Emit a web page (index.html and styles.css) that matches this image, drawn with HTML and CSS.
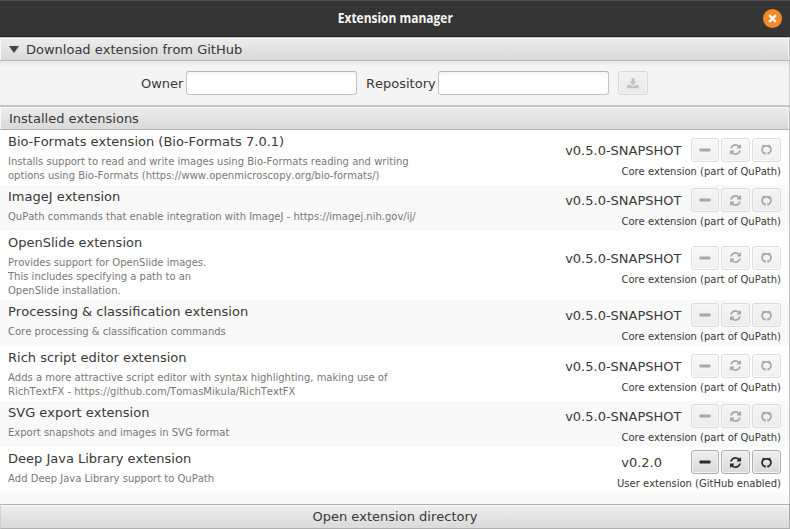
FILE: index.html
```html
<!DOCTYPE html>
<html lang="en">
<head>
<meta charset="utf-8">
<title>Extension manager</title>
<link rel="stylesheet" href="styles.css">
</head>
<body>
<svg class="sprite" aria-hidden="true">
  <symbol id="minus" viewBox="0 0 12 12"><rect x=".5" y="4.600" width="11" height="2.800" rx=".6" fill="currentColor"/></symbol>
  <symbol id="refresh" viewBox="0 0 1536 1536"><path fill="currentColor" d="M1511 928q0 5-1 7-64 268-268 434.500T764 1536q-146 0-282.500-55T238 1324l-129 129q-19 19-45 19t-45-19-19-45V960q0-26 19-45t45-19h448q26 0 45 19t19 45-19 45l-137 137q71 66 161 102t187 36q134 0 250-65t186-179q11-17 53-117 8-23 30-23h192q13 0 22.500 9.500t9.500 22.500zm25-800v448q0 26-19 45t-45 19h-448q-26 0-45-19t-19-45 19-45l138-138Q969 256 768 256q-134 0-250 65T332 500q-11 17-53 117-8 23-30 23H50q-13 0-22.500-9.500T18 608v-7q65-268 270-434.500T768 0q146 0 284 55.500T1297 212l130-129q19-19 45-19t45 19 19 45z"/></symbol>
  <symbol id="github" viewBox="0 0 12 12"><path fill="none" stroke="currentColor" stroke-width="1.900" d="M4.200 11.400V8.900M7.800 11.400V8.900M4.200 10.500A4.900 4.900 0 0 1 2 3.200Q6 .9 10 3.200A4.900 4.900 0 0 1 7.800 10.500"/><path fill="currentColor" d="M1.700.6L5 2 2 5zM10.300.6L7 2l3 3z"/></symbol>
  <symbol id="download" viewBox="0 0 12 12"><path fill="currentColor" d="M4.600 1h2.800v3.500h2.200L6 8.200 2.400 4.500h2.200zM.7 7.900h3L6 9.600l2.300-1.700h3c.3 0 .5.200.5.500v2.300c0 .3-.2.500-.5.500H.7c-.3 0-.5-.2-.5-.5V8.400c0-.3.200-.5.500-.5z"/></symbol>
</svg>
<div class="window">
  <header class="titlebar">
    <span class="spacer"></span>
    <h1 class="title">Extension manager</h1>
    <button class="close" aria-label="Close"><svg viewBox="0 0 8 8"><path d="M1 1l6 6M7 1L1 7"/></svg></button>
  </header>
  <div class="pane-header"><span class="arrow"></span>Download extension from GitHub</div>
  <div class="download">
    <label for="owner">Owner</label><input id="owner" class="field">
    <label for="repo" class="second">Repository</label><input id="repo" class="field">
    <button class="btn get" disabled aria-label="Download"><svg><use href="#download"/></svg></button>
  </div>
  <div class="pane-header">Installed extensions</div>
  <main class="list" id="list"></main>
  <button class="open">Open extension directory</button>
</div>
<script src="script.js"></script>
</body>
</html>
```
FILE: styles.css
```css
* { box-sizing: border-box; }
body {
  margin: 0;
  font: 13px/16px "DejaVu Sans", sans-serif;
  font-kerning: none;
  color: #383838;
  background: #f4f4f4;
}
button { font: inherit; font-kerning: none; color: inherit; padding: 0; margin: 0; }
.sprite { display: none; }
.window { width: 790px; height: 529px; display: flex; flex-direction: column; overflow: hidden; }
.titlebar {
  flex: 0 0 37px;
  display: flex;
  align-items: center;
  justify-content: space-between;
  padding: 0 8px 0 9px;
  background: #353535;
  border-top: 1px solid #505050;
  border-bottom: 1px solid #242424;
}
.spacer { width: 18px; }
.title {
  margin: 0 0 2px;
  font: 700 14px/18px "Open Sans", sans-serif;
  color: #f6f6f6;
  white-space: nowrap;
  transform: scaleX(.855);
}
.close {
  width: 19px;
  height: 19px;
  border: 0;
  border-radius: 50%;
  background: #f58a2b;
  display: grid;
  place-items: center;
  margin-bottom: 1px;
}
.close svg { width: 9px; height: 9px; fill: none; stroke: #fff; stroke-width: 1.9; }
.pane-header {
  flex: 0 0 24px;
  display: flex;
  align-items: center;
  padding: 1px 8px 0 9px;
  border: 1px solid #c2c2c2;
  border-left: 0;
  border-bottom-color: #b5b5b5;
  background: linear-gradient(#ededed, #d9d9d9);
  box-shadow: inset 1px 1px #fafafa, inset -1px 0 #f0f0f0;
}
.arrow {
  border: 5px solid transparent;
  border-top: 7px solid #444;
  border-bottom: 0;
  margin-right: 7px;
}
.download {
  flex: 0 0 45px;
  display: flex;
  align-items: center;
  padding: 0 0 1px 141px;
  background: linear-gradient(#e9e9e9, #f4f4f4 6px);
  border-right: 1px solid #c8c8c8;
  border-bottom: 1px solid #c8c8c8;
}
.download label { padding-top: 2px; }
.field {
  width: 171px;
  height: 24px;
  margin: 0 0 0 3px;
  border: 1px solid #c3c3c3;
  border-top-color: #b4b4b4;
  border-radius: 3px;
  background: linear-gradient(#f4f4f4, #fff 5px);
  outline: 0;
}
.second { margin-left: 8.500px; }
.second + .field { margin-left: 2.500px; }
.btn {
  width: 29px;
  height: 24px;
  display: grid;
  place-items: center;
  border: 1px solid #acacac;
  border-radius: 3px;
  background: linear-gradient(#efefef, #d9d9d9);
  box-shadow: inset 0 0 0 1px #f3f3f3;
  color: #2b2b2b;
}
.btn:disabled { opacity: .4; }
.btn svg { width: 12px; height: 12px; }
.btn .refresh, .btn .github { width: 11px; height: 11px; }
.get { width: 30px; margin-left: 9px; }
.get:disabled { color: #777; }
.list {
  flex: 1;
  background: #f9f9f9;
  border-right: 1px solid #c8c8c8;
  min-height: 0;
}
.row {
  display: flex;
  justify-content: space-between;
  min-height: 46px;
  padding: 0 8px;
  background: #fff;
}
.row:nth-child(even) { background: #f9f9f9; }
.name { margin: 0; padding-top: 4px; font-size: 13px; font-weight: 400; line-height: 16px; }
.desc { margin: 5px 0 2px; font-size: 10px; line-height: 14px; color: #777; white-space: pre; }
.side { align-self: center; height: 46px; padding-top: 3px; }
.actions { display: flex; justify-content: flex-end; align-items: center; }
.version { margin-right: 9.500px; padding-top: 2px; }
.user .version { margin-right: 29px; }
.actions .btn + .btn { margin-left: 2px; }
.actions .btn:first-of-type { width: 28px; }
.origin { font-size: 10px; line-height: 14px; text-align: right; margin-top: 3px; }
.open {
  flex: 0 0 25px;
  padding-top: 1px;
  border: 1px solid #b0b0b0;
  border-left-color: #d0d0d0;
  background: linear-gradient(#efefef, #d9d9d9);
  box-shadow: inset 0 1px #fafafa;
}
```
FILE: script.js
```js
const extensions = [
  ["Bio-Formats extension (Bio-Formats 7.0.1)", "Installs support to read and write images using Bio-Formats reading and writing\noptions using Bio-Formats (https://www.openmicroscopy.org/bio-formats/)"],
  ["ImageJ extension", "QuPath commands that enable integration with ImageJ - https://imagej.nih.gov/ij/"],
  ["OpenSlide extension", "Provides support for OpenSlide images.\nThis includes specifying a path to an\nOpenSlide installation."],
  ["Processing & classification extension", "Core processing & classification commands"],
  ["Rich script editor extension", "Adds a more attractive script editor with syntax highlighting, making use of\nRichTextFX - https://github.com/TomasMikula/RichTextFX"],
  ["SVG export extension", "Export snapshots and images in SVG format"],
  ["Deep Java Library extension", "Add Deep Java Library support to QuPath", "v0.2.0"]
];
const escapeText = s => s.replace(/&/g, "&amp;");
document.getElementById("list").innerHTML = extensions.map(([name, desc, version]) => {
  const off = version ? "" : "disabled";
  const button = (icon, label) => `<button class="btn" ${off} aria-label="${label}"><svg class="${icon}"><use href="#${icon}"/></svg></button>`;
  return `<section class="row ${version ? "user" : ""}">
    <div><h2 class="name">${escapeText(name)}</h2><p class="desc">${escapeText(desc)}</p></div>
    <div class="side">
      <div class="actions"><span class="version">${version || "v0.5.0-SNAPSHOT"}</span>${button("minus", "Remove")}${button("refresh", "Update")}${button("github", "Open on GitHub")}</div>
      <div class="origin">${version ? "User extension (GitHub enabled)" : "Core extension (part of QuPath)"}</div>
    </div>
  </section>`;
}).join("");
```
